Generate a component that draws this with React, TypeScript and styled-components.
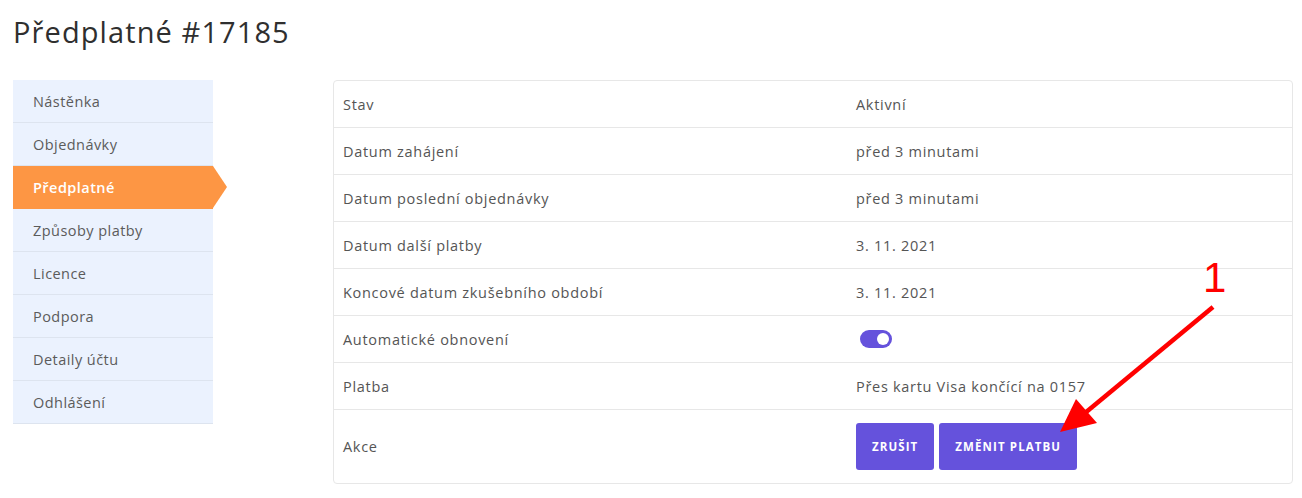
import React from 'react'
import styled, { createGlobalStyle } from 'styled-components'

const GlobalStyle = createGlobalStyle`
  body {
    margin: 0;
    background: #fff;
    font-family: 'Open Sans', 'Liberation Sans', sans-serif;
    color: #515151;
  }
`

const Page = styled.div`
  position: relative;
  width: 1302px;
  height: 498px;
  padding: 12px 9px 0 13px;
  box-sizing: border-box;
`

const Title = styled.h1`
  margin: 0 0 28px 0;
  font-weight: 400;
  font-size: 29px;
  line-height: 40px;
  color: #2f2f2f;
  letter-spacing: 1.1px;
`

const Layout = styled.div`
  display: flex;
  gap: 120px;
  align-items: flex-start;
`

const Nav = styled.ul`
  list-style: none;
  margin: 0;
  padding: 0;
  width: 200px;
  flex-shrink: 0;
`

const NavItem = styled.li<{ $active?: boolean }>`
  position: relative;
  height: 43px;
  box-sizing: border-box;
  padding-left: 20px;
  display: flex;
  align-items: center;
  font-size: 14.5px;
  letter-spacing: 0.45px;
  background: ${({ $active }) => ($active ? '#fd9644' : '#ebf2fe')};
  color: ${({ $active }) => ($active ? '#fff' : '#5b5b5b')};
  font-weight: ${({ $active }) => ($active ? 600 : 400)};
  border-bottom: 1px solid ${({ $active }) => ($active ? '#fd9644' : '#dde4ef')};

  ${({ $active }) =>
    $active &&
    `
    &::after {
      content: '';
      position: absolute;
      right: -14px;
      top: 0;
      border-top: 21.5px solid transparent;
      border-bottom: 21.5px solid transparent;
      border-left: 14px solid #fd9644;
    }
  `}
`

const Panel = styled.div`
  flex: 1;
  border: 1px solid #e7e7e7;
  border-radius: 4px;
  overflow: hidden;
`

const Row = styled.div<{ $tall?: boolean }>`
  display: grid;
  grid-template-columns: 513px 1fr;
  height: ${({ $tall }) => ($tall ? '73px' : '46px')};
  border-bottom: 1px solid #e7e7e7;
  font-size: 14.5px;
  letter-spacing: 0.7px;
  color: #555;

  &:last-child {
    border-bottom: none;
  }
`

const Cell = styled.div`
  display: flex;
  align-items: center;
  gap: 5px;
  padding: 0 9px;
`

const Toggle = styled.span`
  position: relative;
  display: inline-block;
  width: 32px;
  height: 18px;
  margin-left: 4px;
  border-radius: 9px;
  background: #6552dc;

  &::after {
    content: '';
    position: absolute;
    right: 3px;
    top: 3px;
    width: 12px;
    height: 12px;
    border-radius: 50%;
    background: #fff;
  }
`

const Button = styled.button`
  height: 47px;
  padding: 0 16px;
  border: none;
  border-radius: 3px;
  background: #6552dc;
  color: #fff;
  font-family: 'Open Sans', 'Liberation Sans', sans-serif;
  font-weight: 700;
  font-size: 11.5px;
  letter-spacing: 1.1px;
`

const Annotation = styled.svg`
  position: absolute;
  left: 0;
  top: 0;
  pointer-events: none;
`

const rows: [string, string][] = [
  ['Stav', 'Aktivní'],
  ['Datum zahájení', 'před 3 minutami'],
  ['Datum poslední objednávky', 'před 3 minutami'],
  ['Datum další platby', '3. 11. 2021'],
  ['Koncové datum zkušebního období', '3. 11. 2021'],
]

const navItems = [
  'Nástěnka',
  'Objednávky',
  'Předplatné',
  'Způsoby platby',
  'Licence',
  'Podpora',
  'Detaily účtu',
  'Odhlášení',
]

export default function App() {
  return (
    <>
      <GlobalStyle />
      <Page>
        <Title>Předplatné #17185</Title>
        <Layout>
          <Nav>
            {navItems.map((item) => (
              <NavItem key={item} $active={item === 'Předplatné'}>
                {item}
              </NavItem>
            ))}
          </Nav>
          <Panel>
            {rows.map(([label, value]) => (
              <Row key={label}>
                <Cell>{label}</Cell>
                <Cell>{value}</Cell>
              </Row>
            ))}
            <Row>
              <Cell>Automatické obnovení</Cell>
              <Cell>
                <Toggle />
              </Cell>
            </Row>
            <Row>
              <Cell>Platba</Cell>
              <Cell>Přes kartu Visa končící na 0157</Cell>
            </Row>
            <Row $tall>
              <Cell>Akce</Cell>
              <Cell>
                <Button>ZRUŠIT</Button>
                <Button>ZMĚNIT PLATBU</Button>
              </Cell>
            </Row>
          </Panel>
        </Layout>
        <Annotation width="1302" height="498">
          <text x="1203" y="292" fill="#ff0000" fontFamily="Liberation Sans, sans-serif" fontSize="42">
            1
          </text>
          <line x1="1213" y1="307" x2="1085" y2="413" stroke="#ff0000" strokeWidth="4.5" />
          <polygon points="1060,432 1076,399 1097,423" fill="#ff0000" />
        </Annotation>
      </Page>
    </>
  )
}
